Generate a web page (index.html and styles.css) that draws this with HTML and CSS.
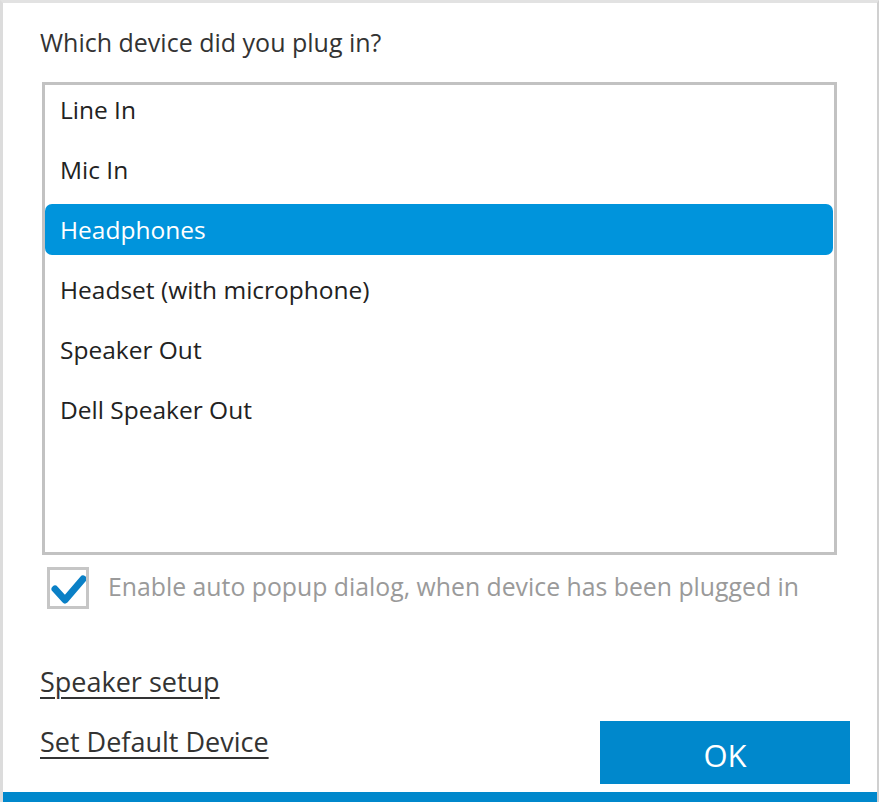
FILE: index.html
```html
<!DOCTYPE html>
<html>
<head>
<meta charset="utf-8">
<link rel="stylesheet" href="styles.css">
</head>
<body>
<div class="window">
  <div class="content">
    <div class="title">Which device did you plug in?</div>
    <div class="listbox">
      <div class="item">Line In</div>
      <div class="item">Mic In</div>
      <div class="item selected">Headphones</div>
      <div class="item">Headset (with microphone)</div>
      <div class="item">Speaker Out</div>
      <div class="item">Dell Speaker Out</div>
    </div>
    <label class="check-row">
      <span class="checkbox">
        <svg width="35" height="35" viewBox="0 0 35 35"><path d="M4 18 L14 29 L32 8" fill="none" stroke="#0a80c6" stroke-width="7" stroke-linecap="round" stroke-linejoin="round"/></svg>
      </span>
      <span class="check-label">Enable auto popup dialog, when device has been plugged in</span>
    </label>
    <div class="footer">
      <div class="links">
        <a class="link">Speaker setup</a>
        <a class="link">Set Default Device</a>
      </div>
      <button class="ok">OK</button>
    </div>
  </div>
  <div class="bottom-bar"></div>
</div>
</body>
</html>
```

FILE: styles.css
```css
html, body {
  margin: 0;
  padding: 0;
  background: #ffffff;
}
body {
  font-family: "Open Sans", "Noto Sans", sans-serif;
  color: #333333;
}
.window {
  width: 874px;
  height: 799px;
  border-top: 3px solid #e2e2e2;
  border-left: 3px solid #dcdcdc;
  border-right: 2px solid #d0d0d0;
  display: flex;
  flex-direction: column;
}
.content {
  flex: 1;
  padding-left: 37px;
  display: flex;
  flex-direction: column;
}
.title {
  margin-top: 19px;
  height: 40px;
  line-height: 40px;
  font-size: 25px;
  color: #333333;
}
.listbox {
  margin-top: 20px;
  margin-left: 2px;
  width: 795px;
  height: 473px;
  box-sizing: border-box;
  border: 3px solid #c2c2c2;
  display: flex;
  flex-direction: column;
}
.item {
  flex: none;
  height: 60px;
  line-height: 50px;
  font-size: 24.5px;
  padding-left: 15px;
  color: #222222;
}
.item.selected {
  height: 51px;
  line-height: 51px;
  margin: -1px 1px 10px 0;
  background: #0094dc;
  color: #ffffff;
  border-radius: 7px;
}
.check-row {
  display: flex;
  align-items: center;
  margin-top: 12px;
  margin-left: 7px;
}
.checkbox {
  width: 42px;
  height: 42px;
  box-sizing: border-box;
  border: 3px solid #c6c6c6;
  display: flex;
  align-items: center;
  justify-content: center;
  flex: none;
}
.check-label {
  margin-left: 19px;
  padding-bottom: 5px;
  font-size: 24.8px;
  color: #9a9a9a;
}
.footer {
  margin-top: 53px;
  margin-right: 27px;
  display: flex;
  justify-content: space-between;
  align-items: flex-start;
}
.links {
  display: flex;
  flex-direction: column;
  gap: 20px;
}
.link {
  font-size: 27px;
  height: 40px;
  line-height: 40px;
  color: #333333;
  text-decoration: underline;
  text-decoration-thickness: 2px;
  text-underline-offset: 5px;
}
.ok {
  margin-top: 59px;
  width: 250px;
  height: 63px;
  padding: 5px 0 0 0;
  border: none;
  background: #0088cc;
  color: #ffffff;
  font-family: "Open Sans", "Noto Sans", sans-serif;
  font-size: 31px;
}
.bottom-bar {
  height: 10px;
  background: #0088cc;
}
```
